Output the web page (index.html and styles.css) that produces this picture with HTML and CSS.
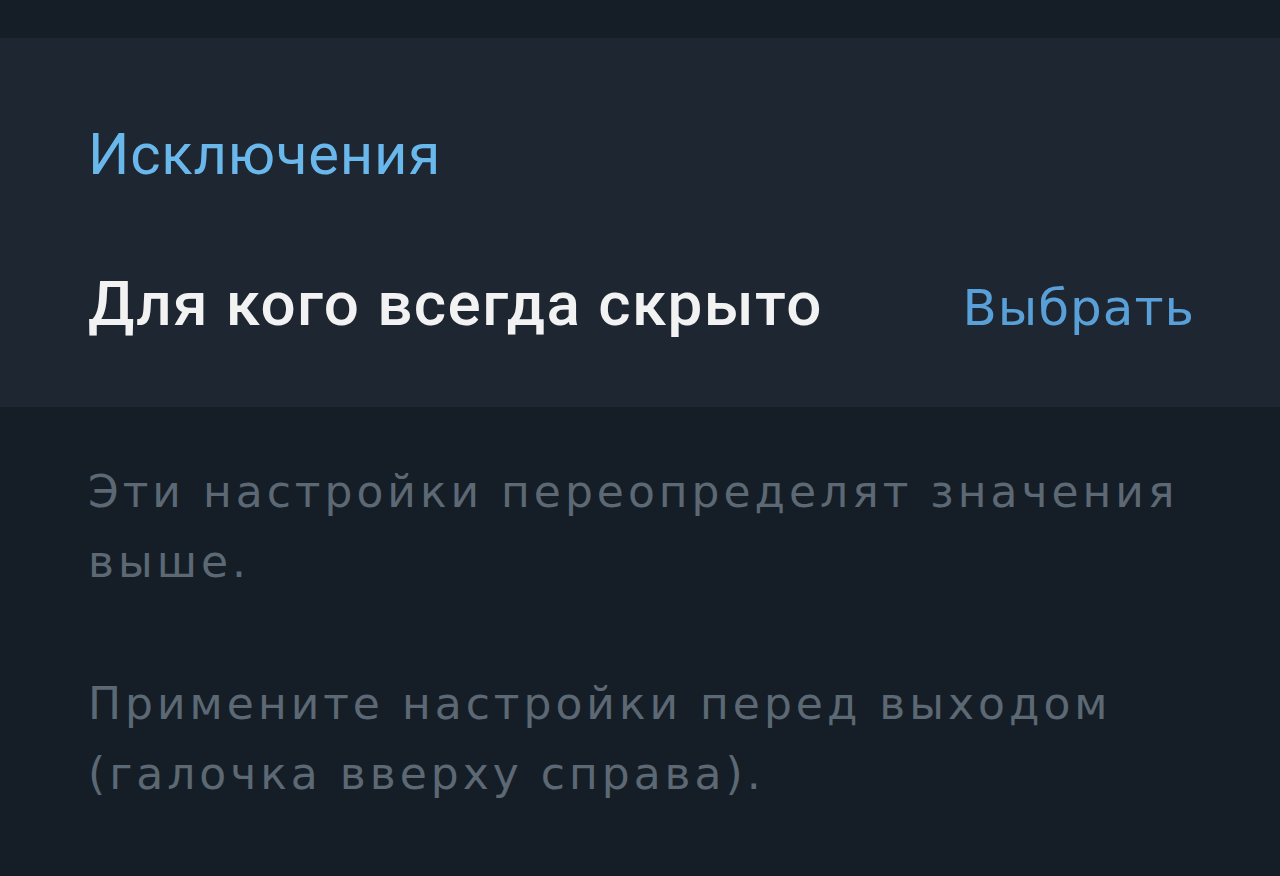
FILE: index.html
```html
<!doctype html>
<html lang="ru">
<head>
    <meta charset="utf-8">
    <meta name="viewport" content="width=device-width, initial-scale=1">
    <title>Исключения</title>
    <link rel="stylesheet" href="styles.css">
</head>
<body>
    <div class="topbar"></div>
    <!-- Exceptions section -->
    <section class="card">
        <h2 class="card-title">Исключения</h2>
        <div class="row">
            <span class="row-label">Для кого всегда скрыто</span>
            <a class="row-action" href="#">Выбрать</a>
        </div>
    </section>
    <div class="hint">
        <p>Эти настройки переопределят значения выше.</p>
        <p>Примените настройки перед выходом (галочка вверху справа).</p>
    </div>
</body>
</html>
```

FILE: styles.css
```css
html, body {
    width: 100%;
    height: 100%;
}

body {
    margin: 0;
    padding: 0;
    background: #151e27;
    font-family: Roboto, "Liberation Sans", sans-serif;
}

.topbar {
    height: 38px;
    background: #151e27;
}

.card {
    background: #1e2731;
    height: 369px;
    box-sizing: border-box;
    padding: 76px 85px 0 88px;
}

.card-title {
    margin: 0;
    font-size: 58px;
    font-weight: 400;
    line-height: 80px;
    color: #6ab7ec;
    letter-spacing: 0.8px;
}

.row {
    display: flex;
    justify-content: space-between;
    align-items: baseline;
    margin-top: 75px;
}

.row-label {
    font-size: 62px;
    font-weight: 500;
    line-height: 70px;
    color: #f2f2f2;
    letter-spacing: 1.4px;
}

.row-action {
    font-family: "DejaVu Sans", sans-serif;
    font-size: 50px;
    line-height: 70px;
    color: #5aa0d8;
    text-decoration: none;
    letter-spacing: 1px;
}

.hint {
    padding: 50px 80px 0 88px;
    font-family: "DejaVu Sans", sans-serif;
    font-size: 44px;
    line-height: 70px;
    color: #5c6873;
    letter-spacing: 4px;
}

.hint p {
    margin: 0 0 72px 0;
}
```
